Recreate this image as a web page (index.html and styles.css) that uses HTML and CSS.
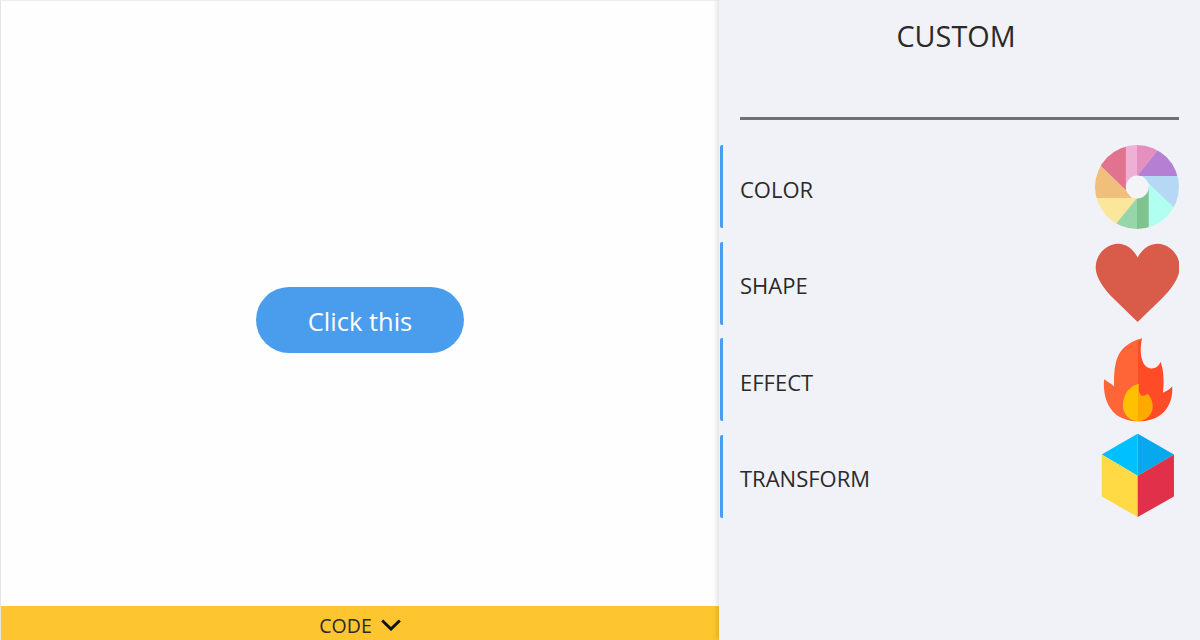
FILE: index.html
```html
<!DOCTYPE html>
<html lang="en">
<head>
    <meta charset="UTF-8">
    <meta name="viewport" content="width=device-width, initial-scale=1.0">
    <title>Custom Button</title>
    <link rel="stylesheet" href="styles.css">
</head>
<body>
<div class="preview">
    <div class="stage">
        <button class="demo-button">Click this</button>
    </div>
    <div class="code-bar">
        <span class="code-label">CODE</span>
        <svg class="chevron" viewBox="0 0 20 12" width="20" height="12">
            <path d="M1.2 1.5 L10 10 L18.8 1.5" fill="none" stroke="#111" stroke-width="3"/>
        </svg>
    </div>
</div>
<aside class="panel">
    <h1 class="panel-title">CUSTOM</h1>
    <hr class="panel-line">
    <ul class="menu">
        <li class="menu-item">
            <span class="menu-label">COLOR</span>
            <svg class="menu-icon" viewBox="45 30 250 250" width="84" height="84">
                <clipPath id="wheel"><circle cx="170" cy="155" r="125"/></clipPath>
                <g clip-path="url(#wheel)">
                    <polygon points="137,0 170,0 170,160 137,160" fill="#eeb0d4"/>
                    <polygon points="170,0 268,0 170,122" fill="#e48fbd"/>
                    <polygon points="268,0 400,0 400,122 170,122" fill="#b57fd4"/>
                    <polygon points="185,122 400,122 400,332 205,145" fill="#b5d8f5"/>
                    <polygon points="205,145 400,332 400,400 205,400" fill="#b0fff0"/>
                    <polygon points="183,188 -100,188 -100,400 -2,400" fill="#fbe79b"/>
                    <polygon points="170,188 170,400 -2,400" fill="#97d6a8"/>
                    <polygon points="205,150 205,400 170,400 170,188" fill="#7fc48f"/>
                    <polygon points="155,188 -100,188 -100,-65 137,165" fill="#efbf7b"/>
                    <polygon points="137,165 -100,-65 -100,0 137,0" fill="#e2738f"/>
                </g>
                <circle cx="171" cy="155" r="34" fill="#f3f4f8"/>
            </svg>
        </li>
        <li class="menu-item">
            <span class="menu-label">SHAPE</span>
            <svg class="menu-icon" viewBox="45 21 250 250" width="84" height="84">
                <path d="M172 262 L100 192 C72 165 47 130 47 100 C47 60 80 29 113 29 C140 29 160 47 172 70 C184 47 205 29 232 29 C265 29 297 60 297 100 C297 130 272 165 244 192 Z" fill="#d95b4a"/>
            </svg>
        </li>
        <li class="menu-item">
            <span class="menu-label">EFFECT</span>
            <svg class="menu-icon" viewBox="15 24 250 250" width="84" height="84">
                <path d="M155 25 C85 45 70 85 72 168 C62 160 50 152 42 147 C38 190 50 272 143 272 L143 33 Z" fill="#ff6536"/>
                <path d="M143 272 C215 272 248 225 245 168 C235 178 225 183 217 187 C222 150 218 115 210 95 C205 110 190 118 178 114 C155 110 145 70 155 25 C152 27 147 30 143 33 Z" fill="#ff4b26"/>
                <path d="M143 161 C115 168 98 195 98 225 C98 250 118 272 143 272 Z" fill="#ffc000"/>
                <path d="M143 161 L147 160 C144 170 144 182 150 192 C155 198 165 197 170 190 C178 195 187 210 187 228 C187 250 168 272 143 272 Z" fill="#ffa800"/>
            </svg>
        </li>
        <li class="menu-item">
            <span class="menu-label">TRANSFORM</span>
            <svg class="menu-icon" viewBox="15 21 250 250" width="84" height="84">
                <polygon points="142,20 35,82 142,145" fill="#00c0ff"/>
                <polygon points="142,20 250,82 142,145" fill="#08a8ee"/>
                <polygon points="35,82 142,145 142,268 35,207" fill="#ffda44"/>
                <polygon points="250,82 142,145 142,268 250,207" fill="#e0304a"/>
            </svg>
        </li>
    </ul>
</aside>
</body>
</html>
```

FILE: styles.css
```css
body {
    font-family: "Open Sans", "Noto Sans", sans-serif;
    margin: 0;
    padding: 0;
    width: 1200px;
    height: 640px;
    display: flex;
    overflow: hidden;
    background-color: #fff;
    color: #2a2a2a;
}

.preview {
    width: 718px;
    border-left: 1px solid #e4e4e4;
    border-top: 1px solid #eee;
    display: flex;
    flex-direction: column;
}

.stage {
    flex: 1;
    padding-top: 33px;
    display: flex;
    align-items: center;
    justify-content: center;
    background-color: #fefefe;
}

.demo-button {
    width: 208px;
    height: 66px;
    padding-top: 3px;
    border: none;
    border-radius: 33px;
    background-color: #4a9cec;
    color: #fff;
    font-family: inherit;
    font-size: 25.5px;
    cursor: pointer;
}

.code-bar {
    height: 34px;
    background-color: #fdc530;
    display: flex;
    align-items: center;
    justify-content: center;
    gap: 9px;
    font-size: 19.5px;
}

.code-label {
    padding-top: 5px;
}

.chevron {
    margin-top: 3px;
}

.panel {
    width: 481px;
    background-color: #f0f2f7;
    box-shadow: -2px 0 5px rgba(0, 0, 0, 0.12);
    position: relative;
}

.panel-title {
    margin: 0;
    padding: 16px 7px 0 0;
    height: 101px;
    box-sizing: border-box;
    text-align: center;
    font-size: 28.8px;
    font-weight: 400;
    line-height: 40px;
}

.panel-line {
    margin: 16px 21px 0 21px;
    border: none;
    height: 3px;
    background-color: #6f7075;
}

.menu {
    list-style: none;
    margin: 25px 0 0 1px;
    padding: 0;
    display: flex;
    flex-direction: column;
    gap: 13.5px;
}

.menu-item {
    height: 83px;
    border-left: 3px solid #4a9cec;
    border-radius: 2px;
    padding: 0 21px 0 17px;
    display: flex;
    align-items: center;
    justify-content: space-between;
    font-size: 22px;
}

.menu-label {
    padding-top: 4px;
}

.menu-icon {
    display: block;
}
```
